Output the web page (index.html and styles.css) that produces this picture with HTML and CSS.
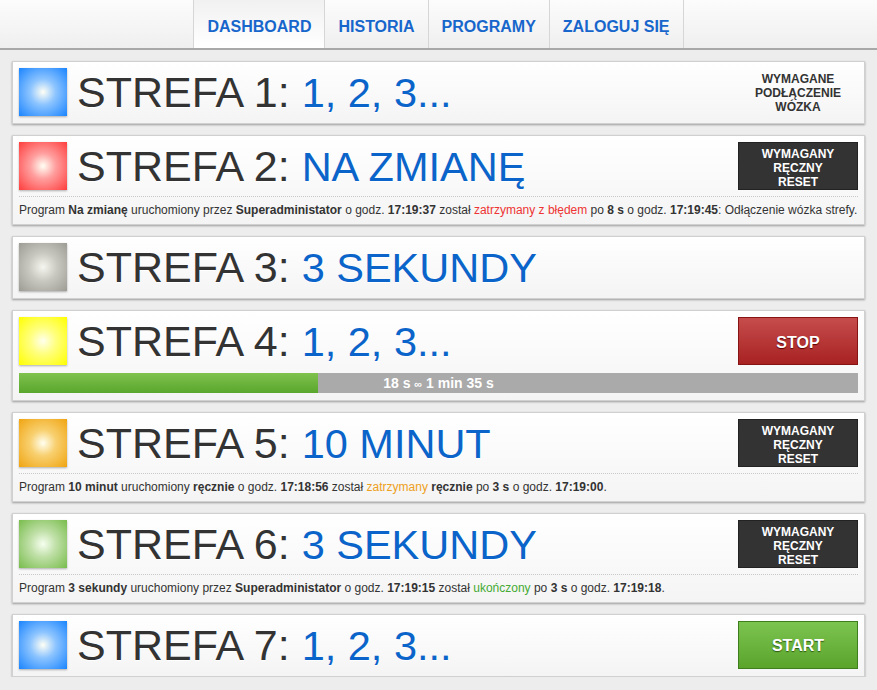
FILE: index.html
```html
<!DOCTYPE html>
<html lang="pl">
<head>
<meta charset="utf-8">
<title>Dashboard</title>
<link rel="stylesheet" href="styles.css">
</head>
<body>
<header class="topbar">
  <nav class="tabs">
    <a class="tab active">DASHBOARD</a>
    <a class="tab">HISTORIA</a>
    <a class="tab">PROGRAMY</a>
    <a class="tab">ZALOGUJ SIĘ</a>
  </nav>
</header>
<main class="zones">
  <section class="zone">
    <div class="zone-row">
      <div class="lamp blue"></div>
      <h2 class="zone-title">STREFA 1: <span class="prog">1, 2, 3...</span></h2>
      <div class="status">WYMAGANE<br>PODŁĄCZENIE<br>WÓZKA</div>
    </div>
  </section>

  <section class="zone">
    <div class="zone-row">
      <div class="lamp red"></div>
      <h2 class="zone-title">STREFA 2: <span class="prog">NA ZMIANĘ</span></h2>
      <div class="btn dark">WYMAGANY<br>RĘCZNY<br>RESET</div>
    </div>
    <p class="info">Program <b>Na zmianę</b> uruchomiony przez <b>Superadministator</b> o godz. <b>17:19:37</b> został <span class="err">zatrzymany z błędem</span> po <b>8 s</b> o godz. <b>17:19:45</b>: Odłączenie wózka strefy.</p>
  </section>

  <section class="zone">
    <div class="zone-row">
      <div class="lamp grey"></div>
      <h2 class="zone-title">STREFA 3: <span class="prog">3 SEKUNDY</span></h2>
    </div>
  </section>

  <section class="zone">
    <div class="zone-row">
      <div class="lamp yellow"></div>
      <h2 class="zone-title">STREFA 4: <span class="prog">1, 2, 3...</span></h2>
      <div class="btn stop">STOP</div>
    </div>
    <div class="progress">
      <div class="progress-fill" style="width: 35.6%"></div>
      <span class="progress-label">18 s <span class="inf">∞</span> 1 min 35 s</span>
    </div>
  </section>

  <section class="zone">
    <div class="zone-row">
      <div class="lamp orange"></div>
      <h2 class="zone-title">STREFA 5: <span class="prog">10 MINUT</span></h2>
      <div class="btn dark">WYMAGANY<br>RĘCZNY<br>RESET</div>
    </div>
    <p class="info">Program <b>10 minut</b> uruchomiony <b>ręcznie</b> o godz. <b>17:18:56</b> został <span class="warn">zatrzymany</span> <b>ręcznie</b> po <b>3 s</b> o godz. <b>17:19:00</b>.</p>
  </section>

  <section class="zone">
    <div class="zone-row">
      <div class="lamp green"></div>
      <h2 class="zone-title">STREFA 6: <span class="prog">3 SEKUNDY</span></h2>
      <div class="btn dark">WYMAGANY<br>RĘCZNY<br>RESET</div>
    </div>
    <p class="info">Program <b>3 sekundy</b> uruchomiony przez <b>Superadministator</b> o godz. <b>17:19:15</b> został <span class="ok">ukończony</span> po <b>3 s</b> o godz. <b>17:19:18</b>.</p>
  </section>

  <section class="zone">
    <div class="zone-row">
      <div class="lamp blue"></div>
      <h2 class="zone-title">STREFA 7: <span class="prog">1, 2, 3...</span></h2>
      <div class="btn start">START</div>
    </div>
  </section>
</main>
</body>
</html>
```
FILE: styles.css
```css
* { box-sizing: border-box; }
html, body {
  margin: 0;
  padding: 0;
  background: #ededed;
  font-family: "Liberation Sans", Arial, sans-serif;
  color: #333;
}
.topbar {
  height: 50px;
  background: linear-gradient(#fcfcfc, #efefef);
  border-bottom: 2px solid #a8a8a8;
  display: flex;
  justify-content: center;
}
.tabs {
  display: flex;
  border-left: 1px solid #d6d6d6;
}
.tab {
  display: flex;
  align-items: center;
  padding: 6px 13px 0;
  height: 48px;
  border-right: 1px solid #d6d6d6;
  font-size: 16px;
  font-weight: bold;
  color: #1766cc;
  text-decoration: none;
}
.tab.active {
  background: linear-gradient(#f1f1f1, #ffffff);
}
.zones {
  padding: 11px 12px 0;
  display: flex;
  flex-direction: column;
  gap: 11px;
}
.zone {
  background: linear-gradient(#ffffff, #f4f4f4);
  border: 1px solid #d0d0d0;
  box-shadow: 0 1px 2px rgba(0,0,0,0.35);
  padding: 6px 6px 7px;
}
.zone-row {
  display: flex;
  align-items: center;
  height: 48px;
}
.lamp {
  width: 48px;
  height: 48px;
  flex: none;
  box-shadow: 0 1px 2px rgba(0,0,0,0.3);
}
.lamp.blue { background: radial-gradient(circle at 50% 50%, #fffff4 0%, #8cc4ff 38%, #1a84ff 100%); }
.lamp.red { background: radial-gradient(circle at 50% 50%, #fffff4 0%, #ff9e9e 38%, #ff3d3d 100%); }
.lamp.grey { background: radial-gradient(circle at 50% 50%, #f6f6f0 0%, #c8c8c0 42%, #9c9c94 100%); }
.lamp.yellow { background: radial-gradient(circle at 50% 50%, #ffffee 0%, #ffff80 38%, #ffff00 100%); }
.lamp.orange { background: radial-gradient(circle at 50% 50%, #fffff0 0%, #f8d070 38%, #f0a410 100%); }
.lamp.green { background: radial-gradient(circle at 50% 50%, #f6fff0 0%, #c0e0a8 38%, #78bc4c 100%); }
.zone-title {
  flex: 1;
  margin: 0 0 0 10px;
  font-size: 43px;
  font-weight: normal;
  color: #333;
  white-space: nowrap;
  line-height: 48px;
  text-shadow: 0 1px 0 #fff;
}
.prog { color: #0b64c9; font-size: 41.5px; }
.status {
  width: 120px;
  flex: none;
  text-align: center;
  font-size: 12px;
  line-height: 14px;
  font-weight: bold;
  color: #333;
  padding-top: 2px;
}
.btn {
  width: 120px;
  height: 48px;
  flex: none;
  display: flex;
  align-items: center;
  justify-content: center;
  text-align: center;
  font-weight: bold;
  color: #fff;
}
.btn.dark {
  background: #333;
  border: 1px solid #222;
  font-size: 12px;
  line-height: 14px;
  padding-top: 3px;
}
.btn.stop {
  background: linear-gradient(#c64c4c, #a82222);
  border: 1px solid #861414;
  font-size: 16px;
  padding-top: 4px;
  text-shadow: 0 1px 1px #5a0000;
}
.btn.start {
  background: linear-gradient(#7cc450, #5aa42c);
  border: 1px solid #3f7e1c;
  font-size: 16px;
  padding-top: 2px;
  text-shadow: 0 1px 1px #2c5a10;
}
.info {
  margin: 6px 0 0;
  padding-top: 6px;
  border-top: 1px dotted #c8c8c8;
  font-size: 12px;
  line-height: 14px;
  color: #333;
  white-space: nowrap;
}
.info .err { color: #ee3333; }
.info .warn { color: #eea020; }
.info .ok { color: #44aa33; }
.progress {
  position: relative;
  margin-top: 8px;
  height: 20px;
  background: #aaaaaa;
}
.progress-fill {
  height: 100%;
  background: linear-gradient(#7fc24e, #5aa62c);
}
.progress-label {
  position: absolute;
  left: 0;
  right: 0;
  top: 0;
  line-height: 20px;
  text-align: center;
  font-size: 14px;
  font-weight: bold;
  color: #fff;
}
.progress-label .inf { font-size: 11px; }
```
